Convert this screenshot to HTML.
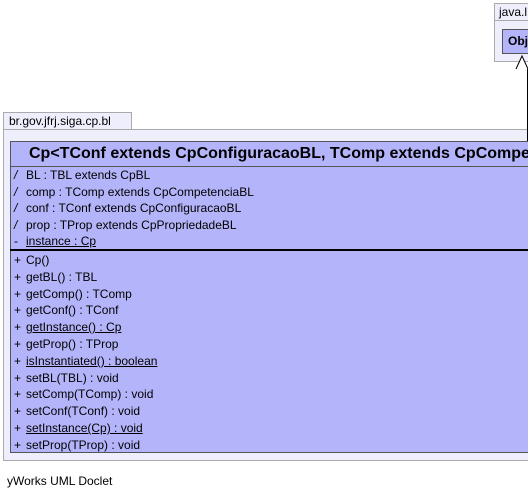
<!DOCTYPE html>
<html style="overflow:hidden"><head><style>
html,body{margin:0;width:528px;height:498px;overflow:hidden;}
body{background:#fff;position:relative;font-family:"Liberation Sans",sans-serif;}
.a{position:absolute;box-sizing:border-box;}
.row{position:absolute;left:10px;height:17px;font-size:12px;line-height:17px;color:#000;white-space:nowrap;}
.row span.v{position:absolute;left:4px;}
.row span.t{position:absolute;left:16px;}
.u{text-decoration:underline;}
</style></head><body>
<div class="a" style="left:494px;top:3px;width:40px;height:18px;border:1px solid #aaa;background:#eeeefc;font-size:12px;line-height:16px;padding-left:4px;">java.l</div>
<div class="a" style="left:494px;top:20px;width:40px;height:42px;border:1px solid #aaa;background:#eeeefc;"></div>
<div class="a" style="left:502px;top:29px;width:30px;height:25px;border:1px solid #555;background:#b4b4fa;font-weight:bold;font-size:12px;line-height:23px;padding-left:5px;">Obj</div>
<div class="a" style="left:3px;top:112px;width:129px;height:18px;border:1px solid #aaa;background:#eeeefc;font-size:12px;line-height:16px;padding-left:5px;">br.gov.jfrj.siga.cp.bl</div>
<div class="a" style="left:3px;top:129px;width:540px;height:332px;border:1px solid #aaa;background:#eeeefc;"></div>
<div class="a" style="left:10px;top:141px;width:540px;height:312px;border:1px solid #555;background:#b4b4fa;"></div>
<div class="a" style="left:10px;top:141px;width:540px;height:26px;border-bottom:1px solid #555;font-weight:bold;font-size:16px;line-height:26px;padding-left:19px;white-space:nowrap;overflow:hidden;">Cp&lt;TConf extends CpConfiguracaoBL, TComp extends CpCompetenciaBL&gt;</div>
<div class="a" style="left:10px;top:249px;width:540px;height:2px;background:#000;"></div>
<svg class="a" style="left:0;top:0" width="528" height="498"><polyline points="516,69 522,56 528,69" fill="#fff" stroke="#000" stroke-width="1"/><line x1="527.5" y1="69" x2="527.5" y2="141" stroke="#000"/></svg>

<div class="row" style="top:167px"><span class="v"><i>/</i></span><span class="t">BL : TBL extends CpBL</span></div>
<div class="row" style="top:183.5px"><span class="v"><i>/</i></span><span class="t">comp : TComp extends CpCompetenciaBL</span></div>
<div class="row" style="top:200px"><span class="v"><i>/</i></span><span class="t">conf : TConf extends CpConfiguracaoBL</span></div>
<div class="row" style="top:216.5px"><span class="v"><i>/</i></span><span class="t">prop : TProp extends CpPropriedadeBL</span></div>
<div class="row" style="top:233px"><span class="v">-</span><span class="t u">instance : Cp</span></div>

<div class="row" style="top:252px"><span class="v">+</span><span class="t">Cp()</span></div>
<div class="row" style="top:268.8px"><span class="v">+</span><span class="t">getBL() : TBL</span></div>
<div class="row" style="top:285.6px"><span class="v">+</span><span class="t">getComp() : TComp</span></div>
<div class="row" style="top:302.4px"><span class="v">+</span><span class="t">getConf() : TConf</span></div>
<div class="row" style="top:319.2px"><span class="v">+</span><span class="t u">getInstance() : Cp</span></div>
<div class="row" style="top:336px"><span class="v">+</span><span class="t">getProp() : TProp</span></div>
<div class="row" style="top:352.8px"><span class="v">+</span><span class="t u">isInstantiated() : boolean</span></div>
<div class="row" style="top:369.6px"><span class="v">+</span><span class="t">setBL(TBL) : void</span></div>
<div class="row" style="top:386.4px"><span class="v">+</span><span class="t">setComp(TComp) : void</span></div>
<div class="row" style="top:403.2px"><span class="v">+</span><span class="t">setConf(TConf) : void</span></div>
<div class="row" style="top:420px"><span class="v">+</span><span class="t u">setInstance(Cp) : void</span></div>
<div class="row" style="top:436.5px"><span class="v">+</span><span class="t">setProp(TProp) : void</span></div>

<div class="a" style="left:7px;top:473px;font-size:12px;line-height:16px;">yWorks UML Doclet</div>
</body></html>
